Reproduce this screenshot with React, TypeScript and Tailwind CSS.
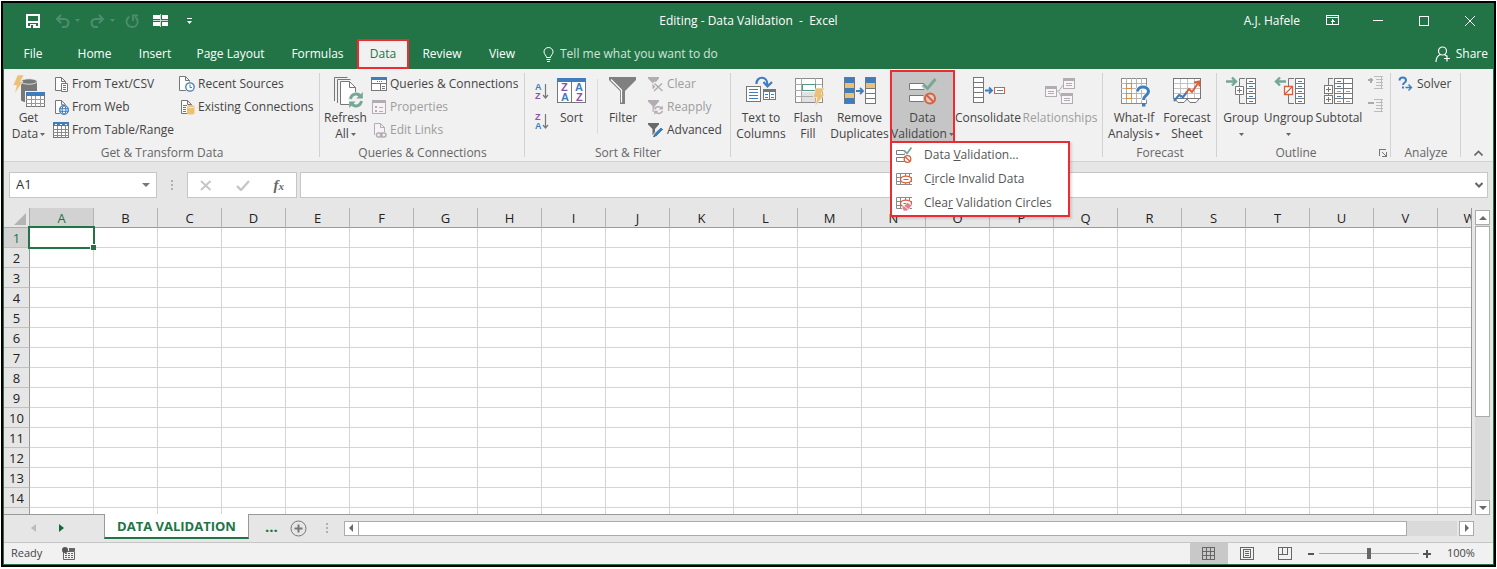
import type { ReactNode } from "react";
import clsx from "clsx";

const GRAY = "#777777";
const BLUE = "#3f7dbd";
const PURPLE = "#8954a8";
const TEAL = "#75a795";
const GOLD = "#ecc177";
const RED = "#d9603b";
const PALE = "#b3adb3";

const columns = "ABCDEFGHIJKLMNOPQRSTUVW".split("");
const rows = Array.from({ length: 14 }, (_, i) => i + 1);

const tabs = [
  { label: "File", className: "w-[58px]" },
  { label: "Home", className: "w-[65px]" },
  { label: "Insert", className: "w-[56px]" },
  { label: "Page Layout", className: "w-[95px]" },
  { label: "Formulas", className: "w-[79px]" },
  { label: "Data", className: "w-[52px]", active: true },
  { label: "Review", className: "w-[66px]" },
  { label: "View", className: "w-[54px]" },
];

/* ---------- shared pieces ---------- */

function Svg({ w = 16, h = 16, crisp = false, children }: { w?: number; h?: number; crisp?: boolean; children: ReactNode }) {
  return (
    <svg width={w} height={h} viewBox={`0 0 ${w} ${h}`} fill="none" className="shrink-0" aria-hidden="true" shapeRendering={crisp ? "crispEdges" : undefined}>
      {children}
    </svg>
  );
}

function Big({ children }: { children: ReactNode }) {
  return (
    <Svg w={36} h={36}>
      {children}
    </Svg>
  );
}

function Caret({ className = "text-[#666]" }: { className?: string }) {
  return (
    <svg width="5" height="3" viewBox="0 0 5 3" className={clsx("inline-block shrink-0 align-middle", className)} aria-hidden="true">
      <path d="M0 0h5L2.5 3z" fill="currentColor" />
    </svg>
  );
}

function Group({ label, className, children, launcher }: { label: string; className: string; children: ReactNode; launcher?: boolean }) {
  return (
    <section aria-label={label} className={clsx("relative flex shrink-0 flex-col", className)}>
      <div className="flex h-[76px] items-start">{children}</div>
      <div className="text-center leading-4 text-[#666]">{label}</div>
      {launcher && (
        <button type="button" aria-label={`${label} settings`} className="absolute right-1 bottom-1">
          <Svg w={8} h={8} crisp>
            <path d="M.5 7V.5H7M3 3l4 4M7.5 3v4.5H3" stroke={GRAY} />
          </Svg>
        </button>
      )}
      <div className="absolute top-1 right-0 h-[84px] w-px bg-[#d2d2d2]" />
    </section>
  );
}

function BigButton({ icon, lines, caret, className, disabled }: { icon: ReactNode; lines: string[]; caret?: boolean; className: string; disabled?: boolean }) {
  return (
    <button
      type="button"
      disabled={disabled}
      className={clsx("flex shrink-0 flex-col items-center pt-[5px] leading-4 whitespace-nowrap", disabled && "text-[#9d9d9d]", className)}
    >
      {icon}
      {lines.map((line, i) => (
        <span key={line || i} className="flex h-4 items-center gap-[2px]">
          {line}
          {caret && i === lines.length - 1 && <Caret />}
        </span>
      ))}
    </button>
  );
}

function SmallButton({ icon, label, disabled }: { icon: ReactNode; label: string; disabled?: boolean }) {
  return (
    <button type="button" disabled={disabled} className={clsx("flex h-[23px] items-center gap-[3px] whitespace-nowrap", disabled && "text-[#9d9d9d]")}>
      {icon}
      {label}
    </button>
  );
}

/* ---------- small icons ---------- */

function Page({ color = GRAY }: { color?: string }) {
  return <path d="M2.5 1.5h6l4 4v9h-10z M8.5 1.5v4h4" fill="#fff" stroke={color} />;
}

const textCsvIcon = (
  <Svg>
    <Page />
    <path d="M8.5 7.5h6v8h-6z" fill="#fff" stroke={GRAY} />
    <path d="M10 9.5h3M10 11.5h3M10 13.5h3" stroke={GRAY} />
  </Svg>
);
const webIcon = (
  <Svg>
    <Page />
    <circle cx="11" cy="11" r="5.5" fill="#f1f1f1" />
    <circle cx="11" cy="11" r="4.3" fill="#fff" stroke={BLUE} strokeWidth="1.3" />
    <path d="M6.5 9.7h9M6.5 12.3h9" stroke={BLUE} />
    <ellipse cx="11" cy="11" rx="1.9" ry="4.3" stroke={BLUE} />
  </Svg>
);
const tableIcon = (
  <Svg crisp>
    <path d="M.5 .5h15v15H.5z" fill="#fff" stroke={GRAY} />
    <path d="M0 0h16v4H0z" fill={BLUE} />
    <path d="M2 2h2M7 2h2M12 2h2" stroke="#fff" />
    <path d="M4.5 4v12M8.5 4v12M12.5 4v12M0 7.5h16M0 10.5h16M0 13.5h16" stroke="#8a8a8a" />
  </Svg>
);
const recentIcon = (
  <Svg>
    <path d="M.5 .5h6l4 4v10H.5z M6.5 .5v4h4" fill="#fff" stroke={GRAY} />
    <circle cx="11" cy="11" r="5.5" fill="#f1f1f1" />
    <circle cx="11" cy="11" r="4.2" fill="#fff" stroke={BLUE} strokeWidth="1.3" />
    <path d="M11 8.500v3h2" stroke={BLUE} />
  </Svg>
);
const existingIcon = (
  <Svg>
    <Page />
    <path d="M4 6.500h4M4 8.500h3M4 10.500h3M4 12.500h3" stroke={GRAY} />
    <path d="M8 7.500c0-2 7.500-2 7.500 0v6.500c0 2-7.500 2-7.500 0z" fill={GOLD} />
    <path d="M8.500 7.800c1 1.200 5.500 1.200 6.500 0" stroke="#fff" strokeWidth=".7" />
  </Svg>
);
const queriesIcon = (
  <Svg crisp>
    <path d="M.5 1.500h15v13H.5z" fill="#fff" stroke={GRAY} />
    <path d="M0 1h16v3H0z" fill={BLUE} />
    <path d="M1 7.500h14M9.500 8v7" stroke={GRAY} />
    <path d="M6 5.500h1M8 5.500h1M10 5.500h1M11 10.500h3M11 12.500h3" stroke={GRAY} />
  </Svg>
);
const propertiesIcon = (
  <Svg crisp>
    <path d="M1.500 1.500h13v13h-13z" fill="#f6f2f6" stroke={PALE} />
    <path d="M1 1h14v3H1z" fill={PALE} />
    <path d="M4 7h2v2H4zM4 11h2v2H4z" fill={PALE} />
    <path d="M8 8.500h4M8 12.500h4" stroke={PALE} />
  </Svg>
);
const editLinksIcon = (
  <Svg>
    <path d="M3.500 13V1.500h6l4 4V10M9.500 1.500v4h4" stroke={PALE} fill="#f6f2f6" />
    <rect x="5.500" y="11" width="5.500" height="4" rx="2" stroke={PALE} strokeWidth="1.500" />
    <rect x="9.500" y="11" width="5.500" height="4" rx="2" stroke={PALE} strokeWidth="1.500" />
  </Svg>
);

function SmallFunnel({ color }: { color: string }) {
  return <path d="M0 1h11v1.500L7 7v6H4.500V7L0 2.500z" fill={color} />;
}

const clearIcon = (
  <Svg>
    <SmallFunnel color={PALE} />
    <path d="M5.500 6.500l9 8.500M14 6.500L5.500 15" stroke="#f1f1f1" strokeWidth="3.500" />
    <path d="M6.500 7.500l8 7.500M14 7.500L6 15" stroke={PALE} strokeWidth="1.500" />
  </Svg>
);
const reapplyIcon = (
  <Svg>
    <SmallFunnel color={PALE} />
    <circle cx="10.500" cy="11" r="5" fill="#f1f1f1" />
    <path d="M6.800 10.500c.5-3 5-3.800 6.700-1M14.500 11.800c-.6 3-5 3.600-6.800 1" stroke={PALE} strokeWidth="1.500" />
    <path d="M14.800 6.500v4h-4zM6.300 15.800v-4h4z" fill={PALE} />
  </Svg>
);
const advancedIcon = (
  <Svg>
    <SmallFunnel color="#6a6a6a" />
    <path d="M5 15.500l1-4 7-6.500 2.500 2.500-7 7z" fill={BLUE} stroke="#f1f1f1" />
    <path d="M5.300 15.300l.6-2.200 1.500 1.500z" fill="#444" />
  </Svg>
);
const solverIcon = (
  <Svg>
    <path d="M1.500 4.500c0-4 6.500-4 6.500 0 0 2.300-3 2.300-3 4.500" stroke={BLUE} strokeWidth="2" />
    <path d="M4 10.500h2v2H4z" fill={BLUE} />
    <path d="M7.500 11.500h6M10.500 8.500l3 3-3 3" stroke={BLUE} strokeWidth="1.400" />
  </Svg>
);

function SortMini({ top, bottom, flip }: { top: string; bottom: string; flip?: boolean }) {
  return (
    <svg width="15" height="20" viewBox="0 0 15 20" fill="none" className="font-['Liberation_Sans',sans-serif] text-[9px] font-bold" aria-hidden="true">
      <text x="1" y="9" fill={flip ? PURPLE : BLUE}>{top}</text>
      <text x="1" y="18" fill={flip ? BLUE : PURPLE}>{bottom}</text>
      <path d="M11.500 3v14M9 14l2.500 3 2.500-3" stroke={GRAY} strokeWidth="1.200" />
    </svg>
  );
}

function DetailMini({ plus }: { plus?: boolean }) {
  return (
    <Svg w={15} h={14} crisp>
      <path d={plus ? "M0 4h5M2.500 2v5" : "M0 4h6"} stroke="#aaa" strokeWidth="2" />
      <path d="M6 .5h8.500M8 3.500h6.500M8 6.500h6.500M8 9.500h6.500M6 12.500h8.500M13.500 0v13" stroke="#bbb" />
    </Svg>
  );
}

/* ---------- large icons ---------- */

const getDataIcon = (
  <Big>
    <path d="M10 7v19c0 3 16 3 16 0V7z" fill="#787878" />
    <ellipse cx="18" cy="7.500" rx="8" ry="2.700" fill="#787878" stroke="#f1f1f1" strokeWidth=".8" />
    <path d="M6.500 1h6.500L9.500 7.500H12L3.500 20l2-8.500H2z" fill={GOLD} stroke="#f1f1f1" strokeWidth=".6" />
    <g shapeRendering="crispEdges">
      <path d="M14 17h20v17H14z" fill="#f1f1f1" />
      <path d="M15.500 18.500h18v14h-18z" fill="#fff" stroke={GRAY} />
      <path d="M15 18h19v4H15z" fill={BLUE} />
      <path d="M20.500 22v11M24.500 22v11M29.500 22v11M15 25.500h19M15 29.500h19" stroke="#999" />
    </g>
  </Big>
);
const refreshIcon = (
  <Big>
    <path d="M6.500 27V3.500h13M9.500 29V5.500h13" stroke={GRAY} />
    <path d="M12.500 7.500h9l6 6v17h-15z" fill="#fff" stroke={GRAY} />
    <path d="M21.500 7.500v6h6" stroke={GRAY} />
    <circle cx="28" cy="26" r="8" fill="#f1f1f1" />
    <path d="M22.500 25c.8-5.500 7.500-6.500 10-2.500M33.500 27c-.8 5.500-7.500 6.500-10 2.500" stroke={TEAL} strokeWidth="2.800" />
    <path d="M34.800 18v6.500h-6.500zM21.200 34v-6.500h6.500z" fill={TEAL} />
  </Big>
);
const sortIcon = (
  <Big>
    <g shapeRendering="crispEdges">
      <path d="M3.500 4.500h28v24h-28z" fill="#fff" stroke={GRAY} />
      <path d="M3 4h29v4H3z" fill={BLUE} />
      <path d="M17.500 8v20" stroke={GRAY} />
    </g>
    <g fill={BLUE} className="font-['Liberation_Sans',sans-serif] text-[11px] font-bold">
      <text x="7" y="17" fill={PURPLE}>Z</text>
      <text x="7" y="27">A</text>
      <text x="21" y="17">A</text>
      <text x="22" y="27" fill={PURPLE}>Z</text>
    </g>
  </Big>
);
const filterIcon = (
  <Big>
    <path d="M4 3h27v3L20 17v13h-5V17L4 6z" fill="#808080" />
    <path d="M6 5.500L16.500 16v12.500" stroke="#fff" strokeWidth="1.200" />
  </Big>
);
const textToColumnsIcon = (
  <Big>
    <g shapeRendering="crispEdges">
      <path d="M3.500 12.500h14v15h-14z" fill="#fff" stroke={GRAY} />
      <path d="M6 15.500h9M6 18.500h9M6 21.500h9M6 24.500h9" stroke={BLUE} />
      <path d="M20.500 15.500h12v10h-12z" fill="#fff" stroke={GRAY} />
      <path d="M20 15h13v3H20z" fill={GRAY} />
      <path d="M26.500 18v8" stroke={GRAY} />
      <path d="M22 20.500h3M28 20.500h3M22 23.500h3M28 23.500h3" stroke={BLUE} />
    </g>
    <path d="M13.500 10C13 2 24.500 1 24.500 11" stroke={BLUE} strokeWidth="2.200" />
    <path d="M20.500 8l4 4.500 4.500-4.500" stroke={BLUE} strokeWidth="2.200" />
  </Big>
);
const flashFillIcon = (
  <Big>
    <g shapeRendering="crispEdges">
      <path d="M5.500 4.500h27v24h-27z" fill="#fff" stroke="#8c8c8c" />
      <path d="M12 18h13v10H12z" fill="#e1e1e1" />
      <path d="M5 10.500h27M5 16.500h27M5 22.500h27M11.500 4v24M25.500 4v24" stroke="#ababab" />
      <path d="M12.500 10.500h13v6h-13z" fill="#fff" stroke="#4f9a7c" />
    </g>
    <path d="M26 14h8.500l-3.500 6h4L25 32.500l2-9h-4z" fill={GOLD} stroke="#f1f1f1" strokeWidth=".6" />
  </Big>
);
const removeDuplicatesIcon = (
  <Big>
    <g shapeRendering="crispEdges">
      <path d="M2 3h11v27H2zM23 3h11v27H23z" fill={GRAY} />
      <path d="M3 4h9v5H3zM3 14h9v5H3zM3 24h9v5H3zM24 4h9v5h-9z" fill={BLUE} />
      <path d="M3 9h9v5H3zM3 19h9v5H3zM24 9h9v5h-9z" fill={GOLD} />
      <path d="M24 15h9v4h-9zM24 20h9v4h-9zM24 25h9v4h-9z" fill="#fff" />
    </g>
    <path d="M14 17h7M18 14l3 3-3 3" stroke={BLUE} strokeWidth="1.800" />
  </Big>
);
const dataValidationIcon = (
  <Big>
    <path d="M4.500 9.500h15v6h-15zM4.500 21.500h15v6h-15z" fill="#fff" stroke={GRAY} />
    <path d="M18 10.500l4.500 4.500L31 5" stroke="#c5c5c5" strokeWidth="5" />
    <path d="M18.500 10.500l4 4L30.500 5" stroke={TEAL} strokeWidth="2.800" />
    <circle cx="25" cy="24.500" r="7" fill="#c5c5c5" />
    <circle cx="25" cy="24.500" r="5" fill="#d8cdca" stroke={RED} strokeWidth="2" />
    <path d="M21.500 21l7 7" stroke={RED} strokeWidth="2" />
  </Big>
);
const consolidateIcon = (
  <Big>
    <g shapeRendering="crispEdges">
      <path d="M3.500 3.500h10v25h-10z" fill="#fff" stroke={GRAY} />
      <path d="M4 8.500h9M4 13.500h9M4 18.500h9M4 23.500h9" stroke={GRAY} />
      <path d="M24.500 13.500h10v6h-10z" fill="#fff" stroke={RED} />
      <path d="M27 16.500h6" stroke={GRAY} />
    </g>
    <path d="M15 16.500h7M19 13.500l3 3-3 3" stroke={BLUE} strokeWidth="1.800" />
  </Big>
);
const relationshipsIcon = (
  <Big>
    <path d="M15 17h2l4-6M17 18l3 6" stroke={PALE} />
    <g shapeRendering="crispEdges">
      <path d="M3.500 12.500h11v10h-11zM21.500 4.500h11v10h-11zM19.500 19.500h11v10h-11z" fill="#f8f5f8" stroke={PALE} />
      <path d="M3 12h12v3H3zM21 4h12v3H21zM19 19h12v3H19z" fill={PALE} />
      <path d="M6 17.500h6M6 19.500h6M24 9.500h6M24 11.500h6M22 24.500h6M22 26.500h6" stroke={PALE} />
    </g>
  </Big>
);
const whatIfIcon = (
  <Big>
    <g shapeRendering="crispEdges">
      <path d="M5.500 4.500h25v25h-25z" fill="#fff" stroke="#8c8c8c" />
      <path d="M5 9.500h25M5 14.500h25M5 19.500h25M5 24.500h25M10.500 4v25M15.500 4v25M20.500 4v25M25.500 4v25" stroke="#b5b5b5" />
      <path d="M10.500 9.500h5v5h-5zM10.500 19.500h5v5h-5z" fill="#fff" stroke="#e08a3c" />
    </g>
    <path d="M21.500 18c0-6.500 11-6.500 11 0 0 4-5 4-5 8.500" stroke="#f6f6f6" strokeWidth="5" />
    <path d="M21.500 17.500c0-6 11-6 11 0 0 4-5 4-5 8.500" stroke={BLUE} strokeWidth="3" />
    <path d="M26 29h3.500v3.500H26z" fill={BLUE} />
  </Big>
);
const forecastIcon = (
  <Big>
    <g shapeRendering="crispEdges">
      <path d="M4.500 4.500h27v20h-27z" fill="#fff" stroke={GRAY} />
      <path d="M5 9.500h26M5 14.500h26M5 19.500h26M11.500 5v19M18.500 5v19M25.500 5v19" stroke="#c3c3c3" />
    </g>
    <path d="M6 25l3 3.500h6l3-3.500 3 3.500h6l3-3.500" fill="#fff" stroke={GRAY} />
    <path d="M5 27l5-6 4 2 4-5" stroke={BLUE} strokeWidth="2.200" />
    <path d="M17 19l3-4 3 3 6.500-9.500" stroke={RED} strokeWidth="2" />
    <path d="M25 8.500l5-1 .500 5" stroke={RED} strokeWidth="2" />
  </Big>
);

function OutlineTable({ x }: { x: number }) {
  return (
    <g shapeRendering="crispEdges" transform={`translate(${x} 0)`}>
      <path d="M.5 4.500h9v25h-9z" fill="#fff" stroke={GRAY} />
      <path d="M1 9.500h8M1 14.500h8M1 19.500h8M1 24.500h8" stroke={GRAY} />
      <path d="M3 7.500h4M3 12.500h4M3 17.500h4M3 22.500h4M3 27.500h4" stroke={BLUE} />
    </g>
  );
}

const groupIcon = (
  <Big>
    <path d="M22 4.500h-5.500v25H22" stroke={GRAY} />
    <path d="M12.500 12.500h8v8h-8z" fill="#fff" stroke={GRAY} />
    <path d="M14 16.500h5M16.500 14v5" stroke={GRAY} />
    <path d="M3 7.500h10M9.500 4l4 3.500-4 3.500" stroke="#f1f1f1" strokeWidth="4" />
    <path d="M3 7.500h10M9 3.500l4 4-4 4" stroke={TEAL} strokeWidth="2.400" />
    <OutlineTable x={23} />
  </Big>
);
const ungroupIcon = (
  <Big>
    <path d="M23 4.500h-5.500v25H23" stroke={GRAY} />
    <path d="M13.500 12.500h8v8h-8z" fill="#fff" stroke={RED} strokeWidth="1.300" />
    <path d="M14 20l7-7" stroke={RED} strokeWidth="1.300" />
    <path d="M15 7.500H5M9 3.500l-4 4 4 4" stroke="#f1f1f1" strokeWidth="4" />
    <path d="M15 7.500H5M9 3.500l-4 4 4 4" stroke={TEAL} strokeWidth="2.400" />
    <OutlineTable x={24} />
  </Big>
);
const subtotalIcon = (
  <Big>
    <g shapeRendering="crispEdges">
      <path d="M12 4.500H7.500v25H12" stroke={GRAY} />
      <path d="M3.500 11.500h8v8h-8zM3.500 21.500h8v8h-8z" fill="#fff" stroke={GRAY} />
      <path d="M5 15.500h5M7.500 13v5M5 25.500h5M7.500 23v5" stroke={GRAY} />
      <path d="M13.500 4.500h18v25h-18z" fill="#fff" stroke={GRAY} />
      <path d="M14 9.500h17M14 14.500h17M14 19.500h17M14 24.500h17M22.500 5v24" stroke={GRAY} />
      <path d="M16 7.500h4M16 12.500h4M16 22.500h4" stroke={BLUE} />
      <path d="M16 17.500h4M25 17.500h4M16 27.500h4M25 27.500h4" stroke="#e08a3c" />
    </g>
  </Big>
);

/* ---------- menu icons ---------- */

const menuValidationIcon = (
  <Svg>
    <path d="M.5 3.500h8v4h-8zM.5 10.500h8v4h-8z" fill="#fff" stroke={GRAY} />
    <path d="M8 3.500l3 3L15.500.5" stroke="#fff" strokeWidth="3.500" />
    <path d="M8 3.500l3 3L15.500.5" stroke={TEAL} strokeWidth="1.800" />
    <circle cx="11.500" cy="12" r="3.300" fill="#fff" stroke={RED} strokeWidth="1.300" />
    <path d="M9.200 9.700l4.600 4.600" stroke={RED} strokeWidth="1.300" />
  </Svg>
);

function InvalidCells() {
  return (
    <>
      <path d="M16 2.500H.5v11H16M.5 6.500H16M.5 10.500H16M4.500 2.500v11M9.500 2.500v11M13.500 2.500v11" stroke="#8a8a8a" />
      <ellipse cx="10" cy="8.500" rx="5.500" ry="3.400" fill="#fff" stroke={RED} strokeWidth="1.400" />
      <path d="M7.500 8.500h5" stroke={GRAY} />
    </>
  );
}

const circleIcon = (
  <Svg>
    <InvalidCells />
  </Svg>
);
const clearCirclesIcon = (
  <Svg>
    <InvalidCells />
    <path d="M6 12.500l5.500-5 4.500 3-5 5.500H7.500z" fill="#e77b90" stroke="#fff" strokeWidth=".7" />
    <path d="M8 11l4.500 3.500" stroke="#fff" strokeWidth=".8" />
  </Svg>
);

/* ---------- page parts ---------- */

function TitleBar() {
  return (
    <header className="grid h-[35px] grid-cols-[1fr_auto_1fr] items-center text-white">
      <div className="flex items-center pl-[22px]">
        <button type="button" aria-label="Save" className="mr-[15px]">
          <Svg w={14} h={14} crisp>
            <path d="M1 1h12v12H1z" stroke="#fff" strokeWidth="2" />
            <path d="M2 7h10v2H2zM4 10h6v4H4z" fill="#fff" />
            <path d="M5 11h2v3H5z" fill="#227447" />
          </Svg>
        </button>
        <button type="button" aria-label="Undo" disabled className="flex items-center gap-[5px] text-[#4d8e6c]">
          <Svg w={15} h={14}>
            <path d="M2 5h7.500c5.500 0 5 8 0 8H7M6 1L2 5l4 4" stroke="currentColor" strokeWidth="2" />
          </Svg>
          <Caret className="text-[#4d8e6c]" />
        </button>
        <button type="button" aria-label="Redo" disabled className="ml-[10px] flex items-center gap-[5px] text-[#4d8e6c]">
          <Svg w={15} h={14}>
            <path d="M13 5H5.500C0 5 .5 13 5.500 13H8M9 1l4 4-4 4" stroke="currentColor" strokeWidth="2" />
          </Svg>
          <Caret className="text-[#4d8e6c]" />
        </button>
        <button type="button" aria-label="Repeat" disabled className="ml-[10px] text-[#4d8e6c]">
          <Svg w={14} h={14}>
            <path d="M4.500 2.800C-1 6 2 13 7 13c6 0 7.500-7 3-10M8 7V1.500h5" stroke="currentColor" strokeWidth="1.800" />
          </Svg>
        </button>
        <button type="button" aria-label="Freeze panes" className="ml-[14px]">
          <Svg w={16} h={13} crisp>
            <path d="M0 1h7v4H0zM9 1h6v4H9zM0 8h7v4H0zM9 8h6v4H9z" fill="#fff" />
            <path d="M0 6.500h15M7.500 0v13" stroke="#c6dccf" />
          </Svg>
        </button>
        <button type="button" aria-label="Customize Quick Access Toolbar" className="ml-[18px]">
          <Svg w={5} h={6}>
            <path d="M0 .5h5" stroke="#fff" />
            <path d="M0 3h5L2.500 6z" fill="#fff" />
          </Svg>
        </button>
      </div>
      <h1 className="whitespace-pre">Editing - Data Validation  -  Excel</h1>
      <div className="flex items-center justify-end">
        <span className="mr-[9px]">A.J. Hafele</span>
        <button type="button" aria-label="Ribbon Display Options" className="flex w-[46px] justify-center">
          <Svg w={13} h={11} crisp>
            <path d="M.5 .5h12v9H.5zM.5 2.500h12M6.500 4v6M4.500 6.500h4M5.500 5.500h2" stroke="#fff" />
          </Svg>
        </button>
        <button type="button" aria-label="Minimize" className="flex w-[46px] justify-center">
          <Svg w={10} h={10} crisp>
            <path d="M0 4.500h10" stroke="#fff" />
          </Svg>
        </button>
        <button type="button" aria-label="Maximize" className="flex w-[46px] justify-center">
          <Svg w={10} h={10} crisp>
            <path d="M.5 .5h9v9h-9z" stroke="#fff" />
          </Svg>
        </button>
        <button type="button" aria-label="Close" className="flex w-[46px] justify-center">
          <Svg w={10} h={10}>
            <path d="M0 0l10 10M10 0L0 10" stroke="#fff" />
          </Svg>
        </button>
      </div>
    </header>
  );
}

function TabBar() {
  return (
    <nav aria-label="Ribbon tabs" className="flex h-[31px] items-end text-white">
      {tabs.map((tab) => (
        <button
          key={tab.label}
          type="button"
          className={clsx(
            "h-[30px] shrink-0 whitespace-nowrap",
            tab.className,
            tab.active && "border-2 border-[#ee2a33] bg-[#f1f1f1] text-[#227447]",
          )}
        >
          {tab.label}
        </button>
      ))}
      <label className="ml-[14px] flex h-[30px] items-center gap-[6px]">
        <Svg w={11} h={15}>
          <path d="M3.500 10.500C3.500 8.500 1 7.500 1 4.800a4.500 4.300 0 019 0C10 7.500 7.500 8.500 7.500 10.500zM3.500 12.500h4M4 14.500h3" stroke="#fff" />
        </Svg>
        <input
          aria-label="Tell me what you want to do"
          placeholder="Tell me what you want to do"
          className="w-[200px] bg-transparent outline-none placeholder:text-[#d3e3da]"
        />
      </label>
      <button type="button" className="mr-[5px] ml-auto flex h-[30px] items-center gap-[5px]">
        <Svg w={16} h={17}>
          <circle cx="7.500" cy="5" r="4" stroke="#fff" strokeWidth="1.200" />
          <path d="M1 16c0-4 2-6.500 4.500-7.500M9.500 8.500l2 1.500M12 9.500v6M9 12.500h6" stroke="#fff" strokeWidth="1.200" />
        </Svg>
        Share
      </button>
    </nav>
  );
}

function ValidationMenu() {
  return (
    <div role="menu" className="absolute top-[72px] left-0 z-20 w-[180px] border-2 border-[#ee2a33] bg-white shadow-[2px_2px_2px_rgba(0,0,0,0.12)]">
      <button type="button" role="menuitem" className="flex h-6 w-full items-center gap-3 pl-1 text-[#555]">
        {menuValidationIcon}
        <span>Data <u>V</u>alidation...</span>
      </button>
      <button type="button" role="menuitem" className="flex h-6 w-full items-center gap-3 pl-1 text-[#555]">
        {circleIcon}
        <span>C<u>i</u>rcle Invalid Data</span>
      </button>
      <button type="button" role="menuitem" className="flex h-6 w-full items-center gap-3 pl-1 text-[#555]">
        {clearCirclesIcon}
        <span>Clea<u>r</u> Validation Circles</span>
      </button>
    </div>
  );
}

function Ribbon() {
  return (
    <div className="relative flex h-[93px] border-b border-[#d2d2d2] bg-[#f1f1f1] text-[#444]">
      <Group label="Get & Transform Data" className="w-[316px]">
        <BigButton icon={getDataIcon} lines={["Get", "Data"]} caret className="w-[49px]" />
        <div className="w-[126px] pt-[3px]">
          <SmallButton icon={textCsvIcon} label="From Text/CSV" />
          <SmallButton icon={webIcon} label="From Web" />
          <SmallButton icon={tableIcon} label="From Table/Range" />
        </div>
        <div className="pt-[3px]">
          <SmallButton icon={recentIcon} label="Recent Sources" />
          <SmallButton icon={existingIcon} label="Existing Connections" />
        </div>
      </Group>

      <Group label="Queries & Connections" className="w-[205px]">
        <BigButton icon={refreshIcon} lines={["Refresh", "All"]} caret className="w-[51px]" />
        <div className="pt-[3px]">
          <SmallButton icon={queriesIcon} label="Queries & Connections" />
          <SmallButton icon={propertiesIcon} label="Properties" disabled />
          <SmallButton icon={editLinksIcon} label="Edit Links" disabled />
        </div>
      </Group>

      <Group label="Sort & Filter" className="w-[206px]">
        <div className="flex w-6 flex-col items-end gap-[10px] pt-3">
          <button type="button" aria-label="Sort A to Z">
            <SortMini top="A" bottom="Z" />
          </button>
          <button type="button" aria-label="Sort Z to A">
            <SortMini top="Z" bottom="A" flip />
          </button>
        </div>
        <BigButton icon={sortIcon} lines={["Sort"]} className="w-[45px]" />
        <div className="mt-[10px] ml-[3px] h-[55px] w-px bg-[#dcdcdc]" />
        <BigButton icon={filterIcon} lines={["Filter"]} className="w-[50px]" />
        <div className="pt-[3px]">
          <SmallButton icon={clearIcon} label="Clear" disabled />
          <SmallButton icon={reapplyIcon} label="Reapply" disabled />
          <SmallButton icon={advancedIcon} label="Advanced" />
        </div>
      </Group>

      <Group label="" className="w-[372px] pl-1">
        <BigButton icon={textToColumnsIcon} lines={["Text to", "Columns"]} className="w-[52px]" />
        <BigButton icon={flashFillIcon} lines={["Flash", "Fill"]} className="w-[42px]" />
        <BigButton icon={removeDuplicatesIcon} lines={["Remove", "Duplicates"]} className="w-[61px]" />
        <div className="relative w-[65px] shrink-0">
          <div className="absolute inset-x-0 top-px h-[73px] border-2 border-[#ee2a33] bg-[#c5c5c5]" />
          <BigButton icon={dataValidationIcon} lines={["Data", "Validation"]} caret className="relative w-full" />
          <ValidationMenu />
        </div>
        <BigButton icon={consolidateIcon} lines={["Consolidate"]} className="w-[66px]" />
        <BigButton icon={relationshipsIcon} lines={["Relationships"]} disabled className="w-[78px]" />
      </Group>

      <Group label="Forecast" className="w-[114px]">
        <BigButton icon={whatIfIcon} lines={["What-If", "Analysis"]} caret className="w-[62px]" />
        <BigButton icon={forecastIcon} lines={["Forecast", "Sheet"]} className="w-[44px]" />
      </Group>

      <Group label="Outline" launcher className="w-[174px] pr-4">
        <BigButton icon={groupIcon} lines={["Group", ""]} caret className="w-[48px]" />
        <BigButton icon={ungroupIcon} lines={["Ungroup", ""]} caret className="w-[47px]" />
        <BigButton icon={subtotalIcon} lines={["Subtotal"]} className="w-[54px]" />
        <div className="flex flex-col gap-[9px] pt-[7px] pl-[2px]">
          <button type="button" aria-label="Show detail" disabled>
            <DetailMini plus />
          </button>
          <button type="button" aria-label="Hide detail" disabled>
            <DetailMini />
          </button>
        </div>
      </Group>

      <Group label="Analyze" className="w-[70px]">
        <div className="pt-[3px] pl-[7px]">
          <SmallButton icon={solverIcon} label="Solver" />
        </div>
      </Group>

      <button type="button" aria-label="Collapse the Ribbon" className="mr-[10px] mb-[5px] ml-auto self-end">
        <Svg w={9} h={6}>
          <path d="M.5 5.500l4-4 4 4" stroke="#666" strokeWidth="1.600" />
        </Svg>
      </button>
    </div>
  );
}

function Dots() {
  return (
    <Svg w={2} h={10} crisp>
      <path d="M0 0h2v2H0zM0 4h2v2H0zM0 8h2v2H0z" fill="#b1b1b1" />
    </Svg>
  );
}

function FormulaBar() {
  return (
    <div className="flex h-[46px] items-start bg-[#e6e6e6] px-[5px] pt-[10px]">
      <div className="flex h-[26px] w-[148px] items-center border border-[#c6c6c6] bg-white px-[6px]">
        <input aria-label="Name Box" defaultValue="A1" className="min-w-0 flex-1 text-[13px] text-[#333] outline-none" />
        <button type="button" aria-label="Open name list">
          <Svg w={8} h={4}>
            <path d="M0 0h8L4 4z" fill="#777" />
          </Svg>
        </button>
      </div>
      <div className="flex h-[26px] w-[30px] items-center justify-center">
        <Dots />
      </div>
      <div className="mr-[3px] flex h-[26px] w-[110px] items-center justify-around border border-[#c6c6c6] bg-white">
        <button type="button" aria-label="Cancel" disabled>
          <Svg w={12} h={11}>
            <path d="M1 1l9.500 9M10.500 1L1 10" stroke="#c6c6c6" strokeWidth="2" />
          </Svg>
        </button>
        <button type="button" aria-label="Enter" disabled>
          <Svg w={14} h={11}>
            <path d="M1 6l4 4 8-9" stroke="#c6c6c6" strokeWidth="2.400" />
          </Svg>
        </button>
        <button type="button" aria-label="Insert Function" className="font-['Liberation_Serif',serif] text-[15px] leading-4 font-bold text-[#666] italic">
          f<span className="text-[11px]">x</span>
        </button>
      </div>
      <div className="flex h-[26px] flex-1 items-center border border-[#c6c6c6] bg-white pr-[4px]">
        <input aria-label="Formula Bar" className="min-w-0 flex-1 px-2 text-[13px] outline-none" />
        <button type="button" aria-label="Expand Formula Bar">
          <Svg w={8} h={6}>
            <path d="M.5 1L4 4.500 7.500 1" stroke="#666" strokeWidth="2" />
          </Svg>
        </button>
      </div>
    </div>
  );
}

function ScrollButton({ label, d }: { label: string; d: string }) {
  return (
    <button type="button" aria-label={label} className="flex size-[15px] shrink-0 items-center justify-center border border-[#ababab] bg-white">
      <Svg w={8} h={8}>
        <path d={d} fill="#6a6a6a" />
      </Svg>
    </button>
  );
}

function Sheet() {
  return (
    <div className="flex min-h-0 flex-1 bg-[#e6e6e6]">
      <div className="min-w-0 flex-1 overflow-hidden border-r border-b border-[#999] bg-white">
        <table className="w-[1498px] table-fixed border-separate border-spacing-0 text-[13px] leading-[18px] text-[#222]">
          <thead>
            <tr className="h-5 bg-[#e6e6e6]">
              <th aria-label="Select all" className="w-[26px] border-r border-b border-[#ababab] p-0">
                <div className="flex justify-end pt-[3px] pr-[3px]">
                  <Svg w={12} h={12}>
                    <path d="M12 0v12H0z" fill="#b4b4b4" />
                  </Svg>
                </div>
              </th>
              {columns.map((col) => (
                <th
                  key={col}
                  scope="col"
                  className={clsx(
                    "w-[64px] border-r border-b border-r-[#b5b5b5] border-b-[#999] p-0 text-center font-normal",
                    col === "A" && "bg-[#d2d2d2] text-[#227447]",
                  )}
                >
                  {col}
                </th>
              ))}
            </tr>
          </thead>
          <tbody>
            {rows.map((row) => (
              <tr key={row} className="h-5">
                <th
                  scope="row"
                  className={clsx(
                    "border-r border-b border-r-[#999] border-b-[#c0c0c0] p-0 pt-px text-center font-normal",
                    row === 1 ? "bg-[#d2d2d2] text-[#227447]" : "bg-[#e6e6e6]",
                  )}
                >
                  {row}
                </th>
                {columns.map((col) => (
                  <td key={col} className="relative border-r border-b border-[#d4d4d4] p-0">
                    {row === 1 && col === "A" && (
                      <span className="absolute -inset-x-[2px] -inset-y-[2px] z-10 border-2 border-[#227447]">
                        <span className="absolute -right-[3px] -bottom-[3px] size-[6px] border-t border-l border-white bg-[#227447]" />
                      </span>
                    )}
                  </td>
                ))}
              </tr>
            ))}
            <tr className="h-5">
              <th className="border-r border-[#999] bg-[#e6e6e6] p-0" />
              {columns.map((col) => (
                <td key={col} className="border-r border-[#d4d4d4] p-0" />
              ))}
            </tr>
          </tbody>
        </table>
      </div>
      <div className="ml-[3px] flex w-[18px] flex-col pt-[2px]">
        <ScrollButton label="Scroll up" d="M0 6h8L4 2z" />
        <div className="flex w-[15px] flex-1 flex-col bg-[#dadada]">
          <div className="mt-px h-[191px] border border-[#ababab] bg-white" />
        </div>
        <ScrollButton label="Scroll down" d="M0 2h8L4 6z" />
      </div>
    </div>
  );
}

function SheetTabs() {
  return (
    <div className="flex h-[27px] items-start bg-[#e6e6e6]">
      <div className="flex h-[25px] w-[100px] items-center gap-[23px] pl-[27px]">
        <button type="button" aria-label="Previous sheet" disabled>
          <Svg w={5} h={8}>
            <path d="M5 0v8L0 4z" fill="#bcbcbc" />
          </Svg>
        </button>
        <button type="button" aria-label="Next sheet">
          <Svg w={5} h={8}>
            <path d="M0 0v8l5-4z" fill="#0f6b38" />
          </Svg>
        </button>
      </div>
      <button type="button" className="relative -mt-px h-[25px] w-[145px] border-x border-b-2 border-x-[#999] border-b-[#227447] bg-white pt-[2px] text-[13px] leading-[21px] font-bold whitespace-nowrap text-[#227447]">
        DATA VALIDATION
      </button>
      <button type="button" aria-label="More sheets" className="ml-4 h-[22px] text-[15px] leading-[22px] font-bold text-[#227447]">
        ...
      </button>
      <div className="flex h-[26px] flex-1 items-center pr-[19px]">
        <button type="button" aria-label="New sheet" className="ml-3">
          <Svg w={17} h={17}>
            <circle cx="8.500" cy="8.500" r="7.500" stroke="#777" />
            <path d="M4.500 8.500h8M8.500 4.500v8" stroke="#777" strokeWidth="2" />
          </Svg>
        </button>
        <div className="mr-4 ml-[19px]">
          <Dots />
        </div>
        <ScrollButton label="Scroll left" d="M6 0v8L2 4z" />
        <div className="mr-[2px] flex h-[15px] flex-1 bg-[#dadada]">
          <div className="mr-[50px] flex-1 border border-l-0 border-[#ababab] bg-white" />
        </div>
        <ScrollButton label="Scroll right" d="M2 0v8l4-4z" />
      </div>
    </div>
  );
}

function StatusBar() {
  return (
    <footer className="flex h-[22px] items-center border-t border-[#c6c6c6] bg-[#f1f1f1] text-[11px] text-[#444]">
      <span className="ml-[7px] w-[51px]">Ready</span>
      <button type="button" aria-label="Record macro">
        <Svg w={13} h={13}>
          <path d="M1.500 4.500h11v8h-11z" stroke="#666" />
          <path d="M7 1h6v3H7z" fill="#666" />
          <circle cx="3" cy="3" r="3" fill="#555" />
          <path d="M3 6.500h2M6 6.500h2M9 6.500h2M3 8.500h2M6 8.500h2M9 8.500h2M3 10.500h2M6 10.500h2M9 10.500h2" stroke="#666" />
        </Svg>
      </button>
      <div className="ml-auto flex h-full items-center">
        <button type="button" aria-label="Normal view" className="flex h-full w-[38px] items-center justify-center bg-[#c8c8c8]">
          <Svg w={14} h={13} crisp>
            <path d="M.5 .5h12v12H.5zM4.500 0v13M8.500 0v13M0 4.500h13M0 8.500h13" stroke="#666" />
          </Svg>
        </button>
        <button type="button" aria-label="Page Layout view" className="flex h-full w-[38px] items-center justify-center">
          <Svg w={14} h={13} crisp>
            <path d="M.5 .5h13v12H.5zM3.500 2.500h7v8h-7zM5 4.500h4M5 6.500h4M5 8.500h4" stroke="#666" />
          </Svg>
        </button>
        <button type="button" aria-label="Page Break Preview" className="flex h-full w-[38px] items-center justify-center">
          <Svg w={14} h={13} crisp>
            <path d="M.5 .5h13v12H.5zM4.500 0v7.500M.5 7.500h9V0" stroke="#666" />
          </Svg>
        </button>
        <button type="button" aria-label="Zoom out" className="mr-[4px] ml-1">
          <Svg w={7} h={8} crisp>
            <path d="M0 4h6" stroke="#555" strokeWidth="2" />
          </Svg>
        </button>
        <input
          type="range"
          aria-label="Zoom"
          min={0}
          max={200}
          defaultValue={100}
          className="h-[11px] w-[100px] appearance-none bg-[linear-gradient(#a6a6a6,#a6a6a6)] bg-[length:100%_1px] bg-center bg-no-repeat [&::-webkit-slider-thumb]:h-[11px] [&::-webkit-slider-thumb]:w-1 [&::-webkit-slider-thumb]:appearance-none [&::-webkit-slider-thumb]:bg-[#666]"
        />
        <button type="button" aria-label="Zoom in" className="ml-1">
          <Svg w={8} h={8} crisp>
            <path d="M0 4h8M4 0v8" stroke="#555" strokeWidth="2" />
          </Svg>
        </button>
        <span className="w-[62px] pl-[16px]">100%</span>
      </div>
    </footer>
  );
}

export default function App() {
  return (
    <div className="h-screen bg-white px-px pt-px pb-[2px] font-['Open_Sans','Noto_Sans',sans-serif] text-xs">
      <div className="h-full border-2 border-black">
        <div className="flex h-full flex-col overflow-hidden border-x border-b border-[#227447] bg-[#227447]">
          <TitleBar />
          <TabBar />
          <Ribbon />
          <FormulaBar />
          <Sheet />
          <SheetTabs />
          <StatusBar />
        </div>
      </div>
    </div>
  );
}
